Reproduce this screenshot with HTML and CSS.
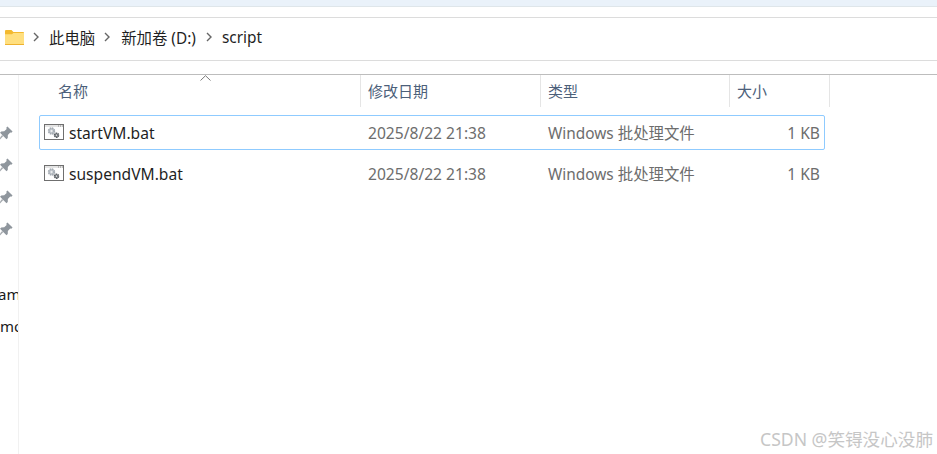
FILE: index.html
```html
<!DOCTYPE html>
<html lang="zh-CN">
<head>
<meta charset="utf-8">
<title>script</title>
<link rel="stylesheet" href="styles.css">
</head>
<body>
<svg class="defs" width="0" height="0" aria-hidden="true">
  <symbol id="pin" viewBox="0 0 14 14">
    <path d="M8.8 0.4 13.6 5.2 12.4 6.4 11.4 6.1 9.2 8.4 9.1 11.2 7.9 12.3 1.9 6.3 3 5.1 5.8 5 8.1 2.8 7.7 1.6z" fill="#8f969d"/>
    <path d="M5 9.4 0.9 13.6 0 13.2 3.8 8.4z" fill="#a6abb0"/>
  </symbol>
  <symbol id="bat" viewBox="0 0 20 16">
    <rect x="0.5" y="0.5" width="19" height="15" fill="#fff" stroke="#6f6f6f"/>
    <rect x="1" y="1" width="18" height="2" fill="#e4e4e4"/>
    <path d="M14 2h1M16 2h1M18 2h0.8" stroke="#8a8a8a"/>
    <circle cx="7.5" cy="7" r="2.8" fill="#c4c9ce" stroke="#a4abb3" stroke-width="1.8" stroke-dasharray="1.6 .6"/>
    <circle cx="7.5" cy="7" r="1" fill="#eef0f2"/>
    <circle cx="12.5" cy="11.2" r="2" fill="#8b9095" stroke="#5c6166" stroke-width="1.6" stroke-dasharray="1.4 .5"/>
    <circle cx="12.5" cy="11.2" r="0.6" fill="#eee"/>
  </symbol>
</svg>

<header class="titlestrip"></header>

<nav class="addressbar">
  <svg class="folder" width="19" height="15" viewBox="0 0 19 15" aria-hidden="true">
    <path d="M0 1.2C0 .5.5 0 1.2 0H6.5L8.4 2H18.2C18.7 2 19 2.3 19 2.8V14.2C19 14.7 18.7 15 18.2 15H.8C.3 15 0 14.7 0 14.2Z" fill="#f3b92f"/>
    <path d="M0 4.3 7 4.3 8.4 3H19V14.2C19 14.7 18.7 15 18.2 15H.8C.3 15 0 14.7 0 14.2Z" fill="#ffdf7f"/>
    <rect y="14" width="19" height="1" fill="#eeb230"/>
  </svg>
  <svg class="chev first" width="6" height="10" viewBox="0 0 6 10" aria-hidden="true"><path d="M1 1 5 5 1 9" fill="none" stroke="#666" stroke-width="1.4"/></svg>
  <span class="crumb">此电脑</span>
  <svg class="chev second" width="6" height="10" viewBox="0 0 6 10" aria-hidden="true"><path d="M1 1 5 5 1 9" fill="none" stroke="#666" stroke-width="1.4"/></svg>
  <span class="crumb">新加卷 (D:)</span>
  <svg class="chev third" width="6" height="10" viewBox="0 0 6 10" aria-hidden="true"><path d="M1 1 5 5 1 9" fill="none" stroke="#666" stroke-width="1.4"/></svg>
  <span class="crumb">script</span>
</nav>

<div class="explorer">
  <aside class="sidebar">
    <div class="pins">
      <svg class="pin" width="15" height="15"><use href="#pin"/></svg>
      <svg class="pin" width="15" height="15"><use href="#pin"/></svg>
      <svg class="pin" width="15" height="15"><use href="#pin"/></svg>
      <svg class="pin" width="15" height="15"><use href="#pin"/></svg>
    </div>
    <div class="navtext">
      <span class="navitem am">am</span>
      <span class="navitem mo">mo</span>
    </div>
  </aside>

  <main class="files">
    <div class="colhead">
      <div class="col col-name">名称<svg class="sort" width="11" height="6" viewBox="0 0 11 6" aria-hidden="true"><path d="M.5 5.5 5.5.7 10.5 5.5" fill="none" stroke="#7a7a7a"/></svg></div>
      <div class="col col-date">修改日期</div>
      <div class="col col-type">类型</div>
      <div class="col col-size">大小</div>
    </div>
    <div class="row selected">
      <div class="cell-name"><svg class="fileicon" width="20" height="16"><use href="#bat"/></svg><span>startVM.bat</span></div>
      <div class="cell cell-date">2025/8/22 21:38</div>
      <div class="cell cell-type">Windows 批处理文件</div>
      <div class="cell cell-size">1 KB</div>
    </div>
    <div class="row">
      <div class="cell-name"><svg class="fileicon" width="20" height="16"><use href="#bat"/></svg><span>suspendVM.bat</span></div>
      <div class="cell cell-date">2025/8/22 21:38</div>
      <div class="cell cell-type">Windows 批处理文件</div>
      <div class="cell cell-size">1 KB</div>
    </div>
  </main>
</div>

<div class="watermark">CSDN @笑锝没心没肺</div>
</body>
</html>
```

FILE: styles.css
```css
* { box-sizing: border-box; }

html, body { height: 100%; }

body {
  margin: 0;
  width: 937px;
  height: 454px;
  overflow: hidden;
  background: #fff;
  position: relative;
  display: flex;
  flex-direction: column;
  font-family: "Noto Sans", "Noto Sans CJK SC", sans-serif;
  font-size: 14px;
}

.defs { position: absolute; }

.titlestrip {
  height: 7px;
  background: #eaf2fa;
  border-bottom: 1px solid #dfe6ea;
  flex: none;
}

.addressbar {
  flex: none;
  margin-top: 10px;
  height: 44px;
  border-top: 1px solid #dcdcdc;
  border-bottom: 1px solid #dcdcdc;
  display: flex;
  align-items: center;
  padding: 0 0 4px 5px;
  color: #1f1f1f;
  font-size: 15.4px;
}

.folder { flex: none; }
.chev { flex: none; }
.chev.first { margin: 0 10px 0 9px; }
.chev.second { margin: 0 11px 0 9px; }
.chev.third { margin: 0 10px; }

.explorer {
  flex: 1;
  margin-top: 13px;
  border-top: 1px solid #bdbdbd;
  display: flex;
  min-height: 0;
}

.sidebar {
  flex: none;
  width: 19px;
  border-right: 1px solid #f1f1f1;
  overflow: hidden;
  padding-top: 51px;
}

.pins { display: flex; flex-direction: column; gap: 17px; margin-left: -2px; }
.pin { display: block; }

.navtext {
  display: flex;
  flex-direction: column;
  margin-top: 41px;
  color: #1a1a1a;
  font-size: 15px;
  line-height: 32px;
  white-space: nowrap;
}

.navitem { display: block; }
.am { margin-left: -2px; }
.mo { margin-left: 0; }

.files { flex: 1; min-width: 0; position: relative; padding-left: 20px; }

.colhead {
  display: flex;
  height: 32px;
  color: #4c607a;
  font-size: 15px;
}

.col {
  padding-left: 7px;
  border-right: 1px solid #e5e5e5;
  line-height: 32px;
  position: relative;
}
.col-name { width: 322px; padding-left: 19px; }
.col-date { width: 180px; }
.col-type { width: 189px; }
.col-size { width: 100px; }

.sort { position: absolute; left: 161px; top: 0; }

.row {
  display: flex;
  align-items: center;
  height: 35px;
  width: 786px;
  margin-top: 6px;
  border: 1px solid transparent;
  border-radius: 2px;
  color: #6d6d6d;
  font-size: 15.6px;
}
.colhead + .row { margin-top: 8px; }
.row.selected { border-color: #8fcbff; }

.cell-name {
  width: 320px;
  display: flex;
  align-items: center;
  gap: 5px;
  padding-left: 4px;
  color: #1f1f1f;
}
.fileicon { flex: none; margin-top: -2px; }
.cell { white-space: nowrap; }
.cell-date { width: 180px; padding-left: 8px; }
.cell-type { width: 189px; padding-left: 8px; font-size: 15.4px; }
.cell-size { width: 95px; text-align: right; padding-right: 4px; }

.watermark {
  position: absolute;
  right: 4px;
  bottom: 4px;
  color: #c6c6c6;
  font-size: 17.6px;
  line-height: 22px;
  white-space: nowrap;
}
```
